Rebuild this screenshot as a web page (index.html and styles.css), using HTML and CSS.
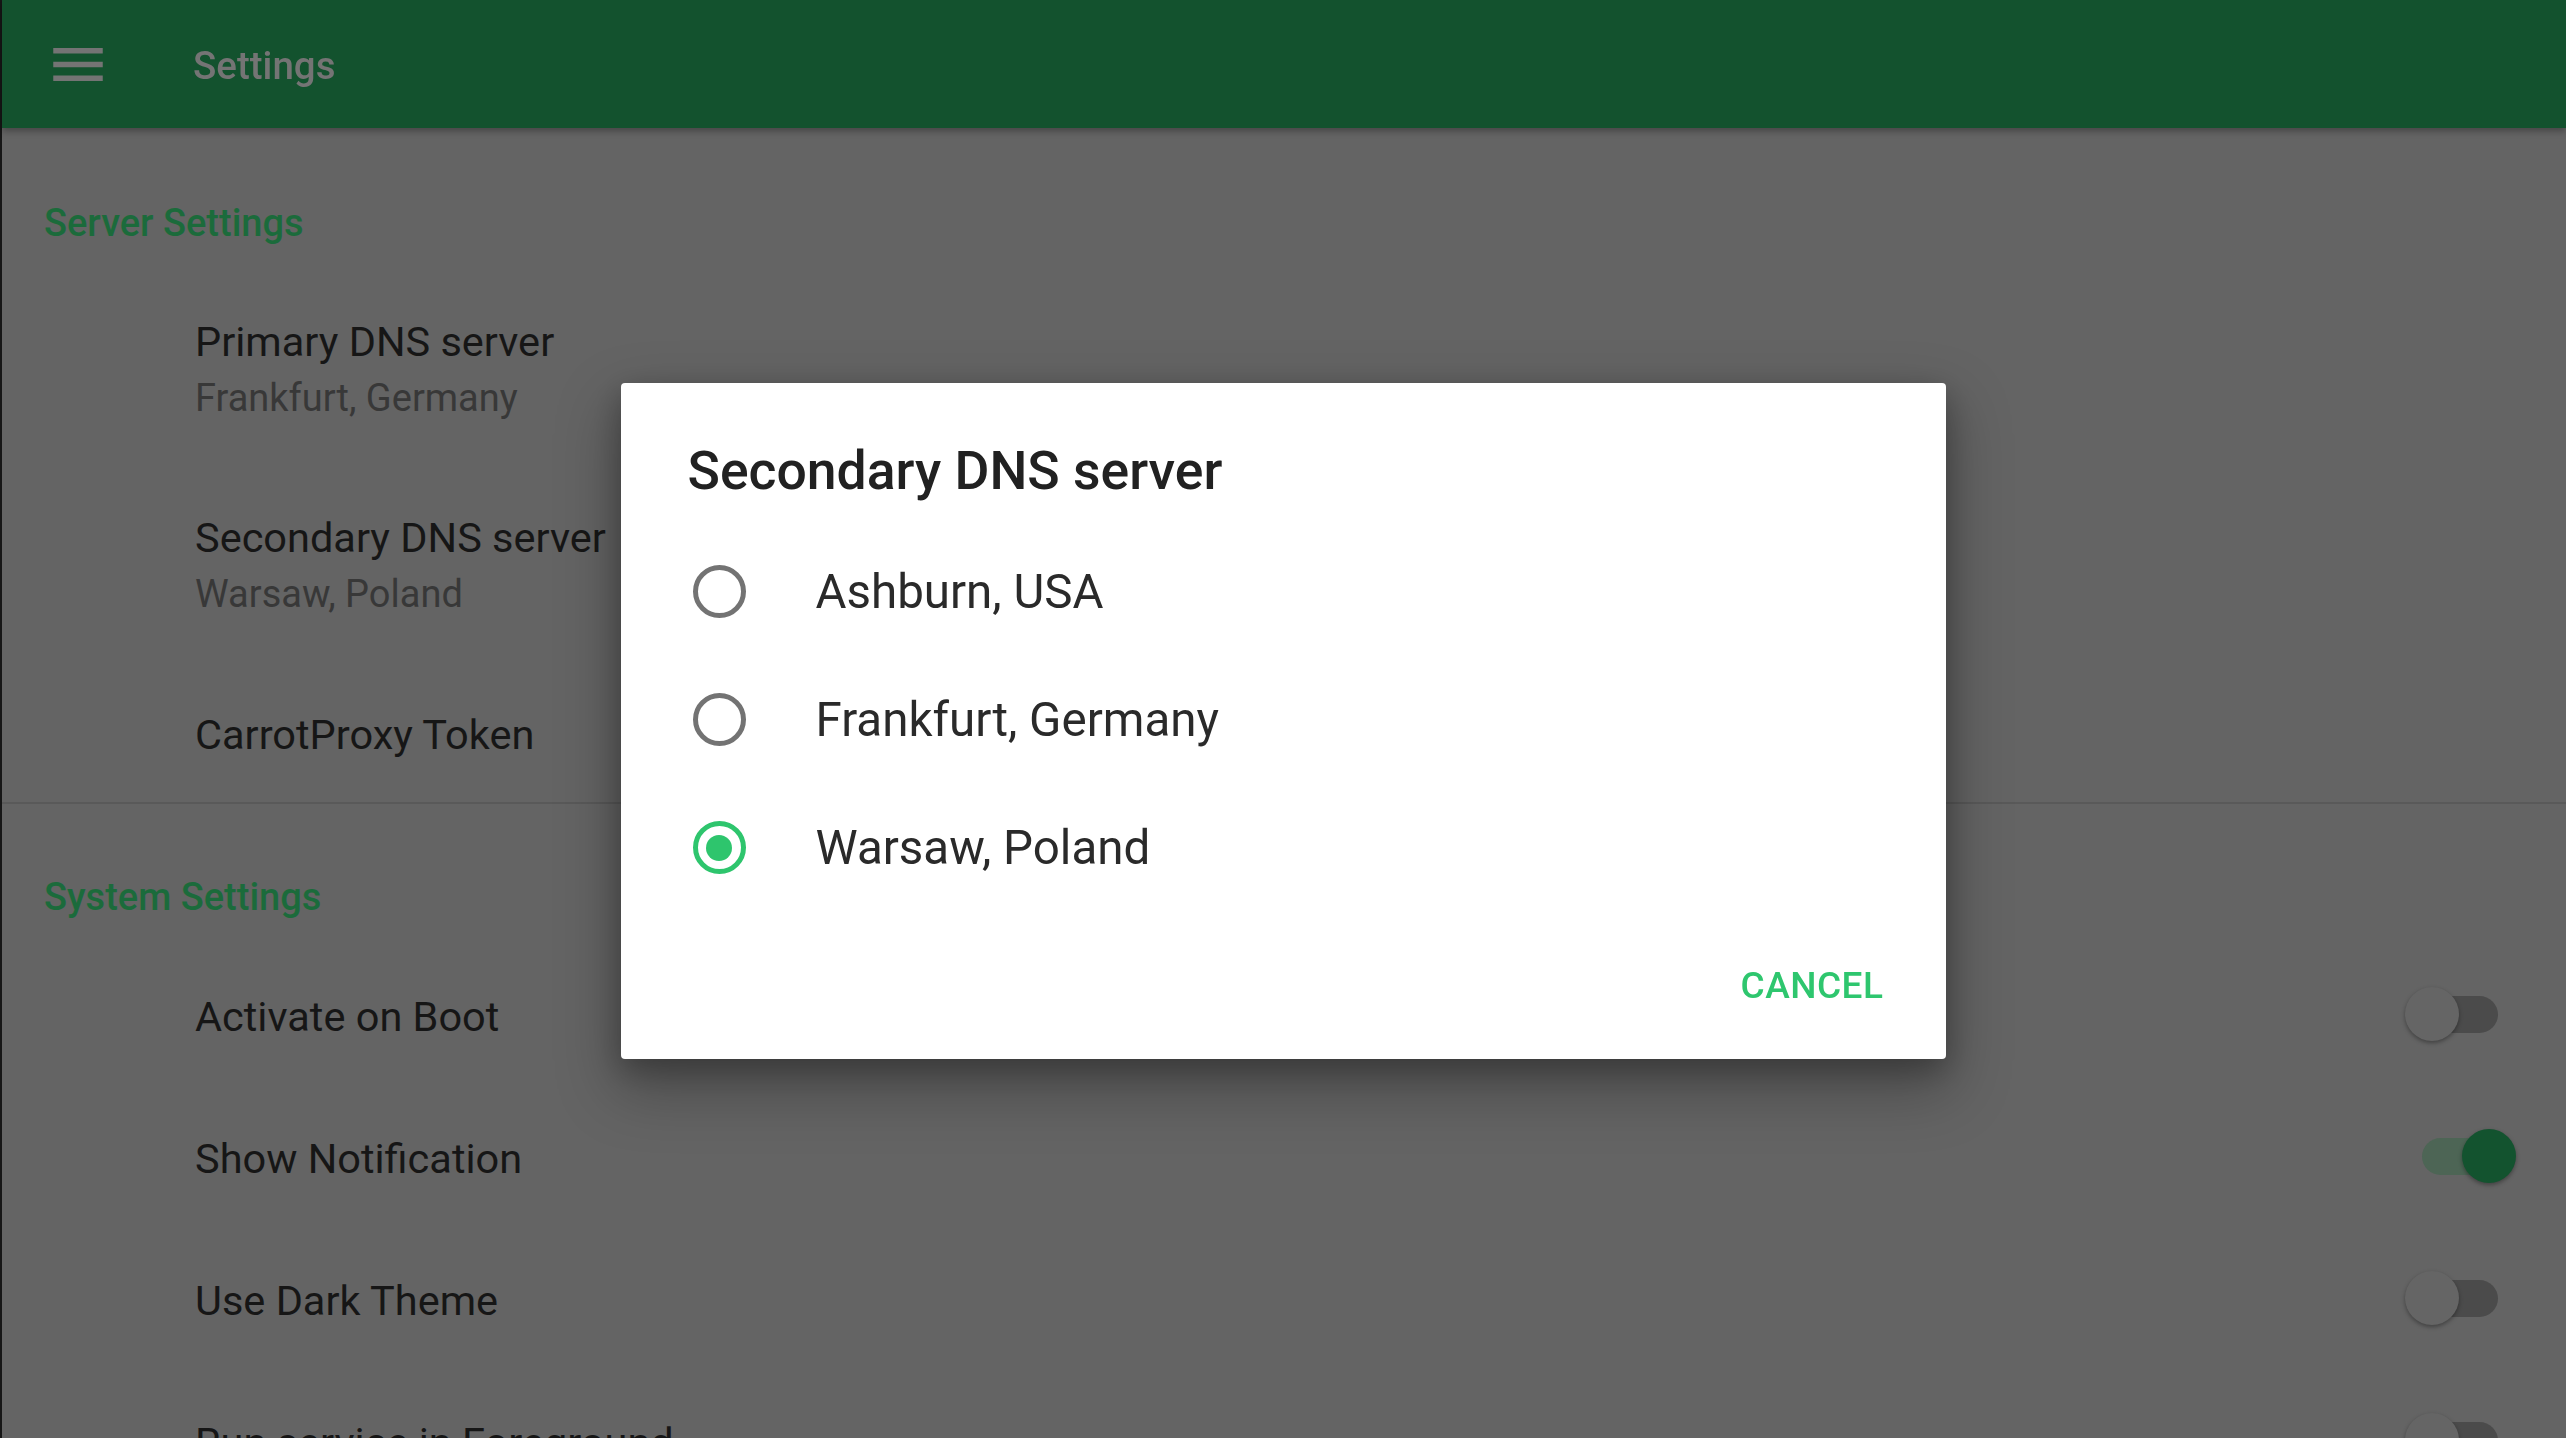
FILE: index.html
```html
<!DOCTYPE html>
<html lang="en">
<head>
<meta charset="utf-8">
<title>Settings</title>
<link rel="stylesheet" href="styles.css">
</head>
<body>
<div class="app">
  <header class="toolbar">
    <svg class="menu-icon" viewBox="0 0 18 12" aria-hidden="true"><path d="M0 0h18v2H0zM0 5h18v2H0zM0 10h18v2H0z"/></svg>
    <span class="toolbar-title">Settings</span>
  </header>
  <main class="prefs">
    <section class="category">
      <h2 class="category-title">Server Settings</h2>
      <div class="pref double">
        <div class="pref-text">
          <div class="pref-title">Primary DNS server</div>
          <div class="pref-summary">Frankfurt, Germany</div>
        </div>
      </div>
      <div class="pref double">
        <div class="pref-text">
          <div class="pref-title">Secondary DNS server</div>
          <div class="pref-summary">Warsaw, Poland</div>
        </div>
      </div>
      <div class="pref single">
        <div class="pref-text">
          <div class="pref-title">CarrotProxy Token</div>
        </div>
      </div>
    </section>
    <div class="divider"></div>
    <section class="category">
      <h2 class="category-title">System Settings</h2>
      <div class="pref single">
        <div class="pref-text"><div class="pref-title">Activate on Boot</div></div>
        <div class="switch"><span class="switch-track"></span><span class="switch-thumb"></span></div>
      </div>
      <div class="pref single">
        <div class="pref-text"><div class="pref-title">Show Notification</div></div>
        <div class="switch on"><span class="switch-track"></span><span class="switch-thumb"></span></div>
      </div>
      <div class="pref single">
        <div class="pref-text"><div class="pref-title">Use Dark Theme</div></div>
        <div class="switch"><span class="switch-track"></span><span class="switch-thumb"></span></div>
      </div>
      <div class="pref single">
        <div class="pref-text"><div class="pref-title">Run service in Foreground</div></div>
        <div class="switch"><span class="switch-track"></span><span class="switch-thumb"></span></div>
      </div>
    </section>
  </main>
</div>

<div class="scrim">
  <div class="dialog" role="dialog">
    <h3 class="dialog-title">Secondary DNS server</h3>
    <div class="radio-list">
      <div class="radio-row"><span class="radio"></span><span class="radio-label">Ashburn, USA</span></div>
      <div class="radio-row"><span class="radio"></span><span class="radio-label">Frankfurt, Germany</span></div>
      <div class="radio-row"><span class="radio checked"></span><span class="radio-label">Warsaw, Poland</span></div>
    </div>
    <div class="dialog-actions">
      <button class="btn">Cancel</button>
    </div>
  </div>
</div>
</body>
</html>
```

FILE: styles.css
```css
html, body {
  margin: 0;
  padding: 0;
}

body {
  width: 2566px;
  height: 1438px;
  overflow: hidden;
  background: #646464;
  font-family: Roboto, "Noto Sans", "Liberation Sans", sans-serif;
}

.app {
  height: 100%;
  box-sizing: border-box;
  border-left: 2px solid #161616;
}

/* Toolbar */
.toolbar {
  position: relative;
  z-index: 1;
  height: 128px;
  display: flex;
  align-items: center;
  background: #13522e;
  box-shadow: 0 3px 7px rgba(0, 0, 0, 0.32);
}

.menu-icon {
  width: 50px;
  height: 33px;
  margin-left: 51px;
  fill: #747474;
  flex: none;
}

.toolbar-title {
  margin-left: 90px;
  padding-top: 3px;
  font-size: 38.5px;
  font-weight: 500;
  color: #747474;
}

/* Preference list */
.prefs {
  padding-top: 4px;
}

.category-title {
  margin: 0;
  padding: 68px 0 26px 42px;
  font-size: 38px;
  line-height: 46px;
  font-weight: 500;
  color: #1b6b3b;
}

.pref {
  display: flex;
  align-items: center;
  justify-content: space-between;
  padding-left: 193px;
  padding-right: 50px;
}

.pref.single {
  height: 142px;
}

.pref.double {
  height: 196px;
}

.pref-title {
  font-size: 41.5px;
  line-height: 56px;
  color: #161616;
}

.pref-summary {
  font-size: 38px;
  line-height: 56px;
  color: #383838;
}

.divider {
  height: 2px;
  margin-top: -4px;
  margin-bottom: 2px;
  background: #595959;
}

/* Switch */
.switch {
  position: relative;
  flex: none;
  width: 111px;
  height: 54px;
  margin-bottom: 6px;
}

.switch-track {
  position: absolute;
  left: 17px;
  top: 9px;
  width: 76px;
  height: 37px;
  border-radius: 19px;
  background: #4b4b4b;
}

.switch-thumb {
  position: absolute;
  left: 0;
  top: 0;
  width: 54px;
  height: 54px;
  border-radius: 50%;
  background: #656565;
  box-shadow: 0 2px 4px rgba(0, 0, 0, 0.35);
}

.switch.on .switch-track {
  background: #4d6555;
}

.switch.on .switch-thumb {
  left: 57px;
  background: #13532f;
}

/* Dialog */
.scrim {
  position: fixed;
  inset: 0;
  padding-top: 3px;
  display: flex;
  align-items: center;
  justify-content: center;
}

.dialog {
  width: 1325px;
  background: #ffffff;
  border-radius: 4px;
  box-shadow: 0 26px 60px 6px rgba(0, 0, 0, 0.28), 0 10px 30px rgba(0, 0, 0, 0.25);
}

.dialog-title {
  margin: 0;
  padding: 56px 0 0 67px;
  font-size: 53.5px;
  line-height: 64px;
  font-weight: 500;
  color: #212121;
}

.radio-list {
  margin-top: 25px;
}

.radio-row {
  height: 128px;
  display: flex;
  align-items: center;
  padding-left: 72px;
}

.radio {
  flex: none;
  width: 53px;
  height: 53px;
  box-sizing: border-box;
  border: 5px solid #737373;
  border-radius: 50%;
  display: flex;
  align-items: center;
  justify-content: center;
}

.radio.checked {
  border-color: #2ec56d;
}

.radio.checked::after {
  content: "";
  width: 26px;
  height: 26px;
  border-radius: 50%;
  background: #2ec56d;
}

.radio-label {
  margin-left: 70px;
  font-size: 47.5px;
  color: #2a2a2a;
}

.dialog-actions {
  height: 147px;
  display: flex;
  align-items: center;
  justify-content: flex-end;
  padding-right: 62px;
}

.btn {
  padding: 0;
  border: 0;
  background: none;
  font-family: inherit;
  font-size: 37px;
  font-weight: 500;
  text-transform: uppercase;
  letter-spacing: 0.5px;
  color: #2ec66e;
}
```
